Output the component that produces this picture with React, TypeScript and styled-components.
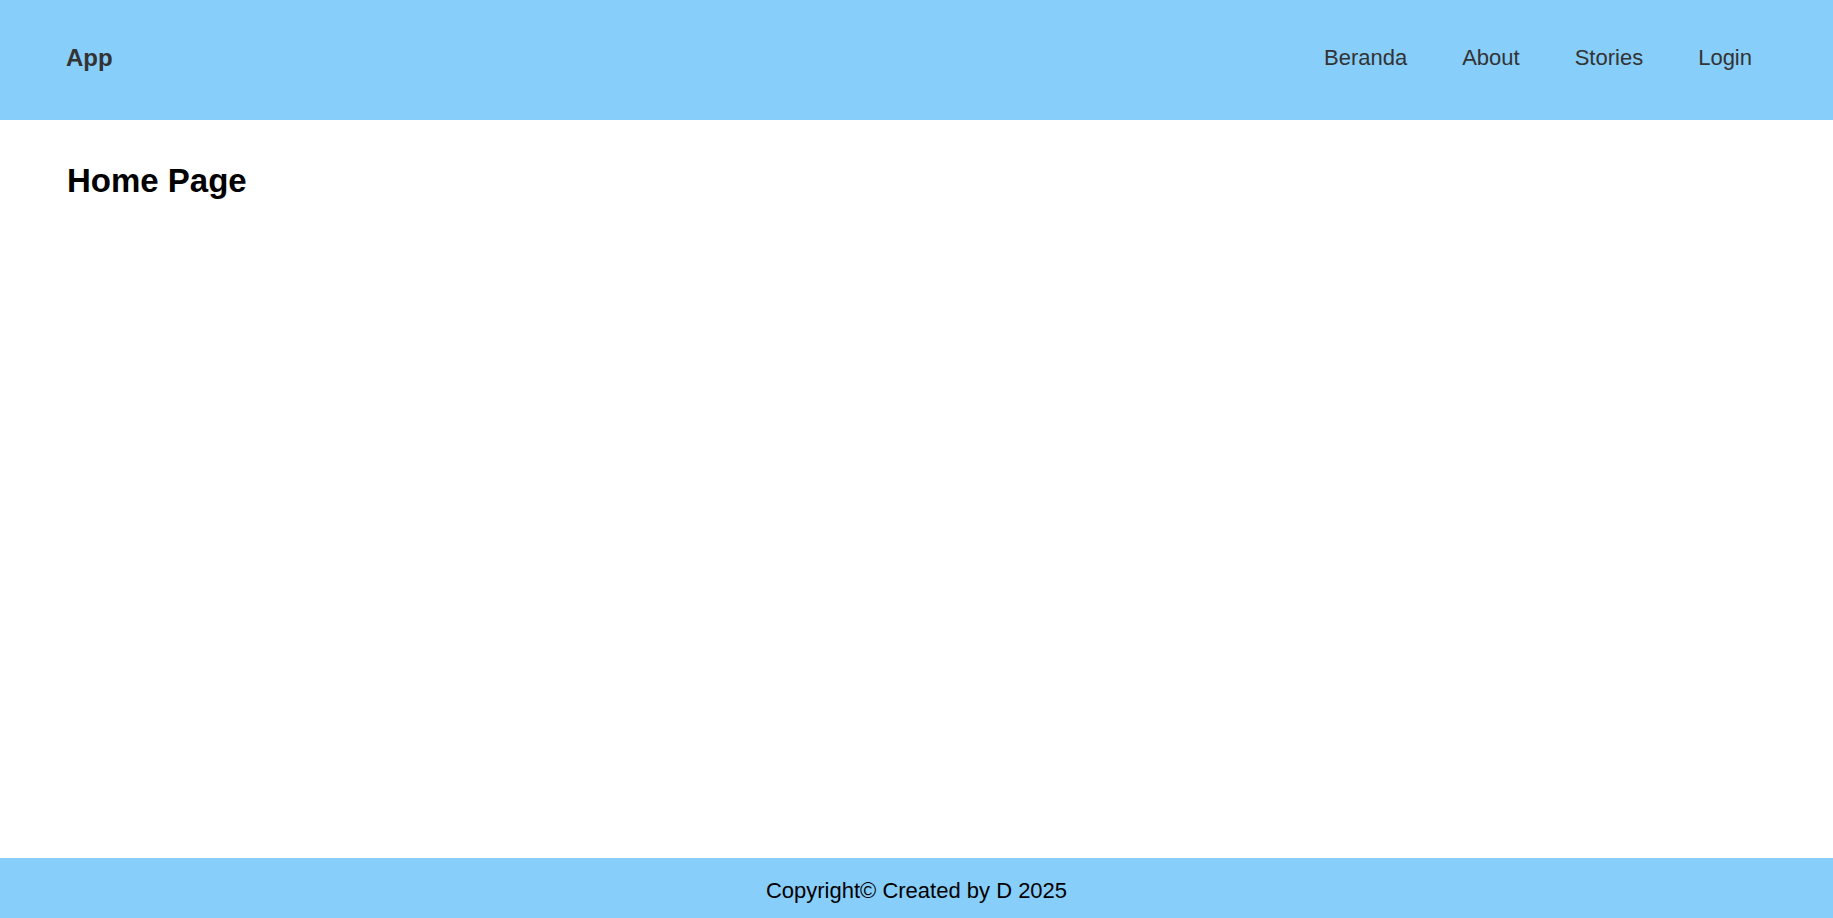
import { createGlobalStyle } from 'styled-components';
import styled from 'styled-components';

const GlobalStyle = createGlobalStyle`
  html, body, #root {
    margin: 0;
    padding: 0;
    height: 100%;
  }
  body {
    font-family: "Liberation Sans", Arial, sans-serif;
    background: #fff;
  }
`;

const navLinks = ['Beranda', 'About', 'Stories', 'Login'];

const App: React.FC = () => {
  return (
    <>
      <GlobalStyle />
      <Page>
        <Header>
          <Brand>App</Brand>
          <Nav>
            {navLinks.map((label) => (
              <NavLink key={label} href="#">
                {label}
              </NavLink>
            ))}
          </Nav>
        </Header>
        <Main>
          <Title>Home Page</Title>
        </Main>
        <Footer>Copyright© Created by D 2025</Footer>
      </Page>
    </>
  );
};

export default App;

// Styled Components
const Page = styled.div`
  display: flex;
  flex-direction: column;
  min-height: 100vh;
`;

const Header = styled.header`
  display: flex;
  align-items: center;
  justify-content: space-between;
  box-sizing: border-box;
  height: 120px;
  padding: 0 81px 5px 66px;
  background: #87cefa;
  color: #333;
`;

const Brand = styled.div`
  font-size: 24px;
  font-weight: bold;
`;

const Nav = styled.nav`
  display: flex;
  gap: 55px;
  padding-top: 1px;
`;

const NavLink = styled.a`
  font-size: 22px;
  color: #333;
  text-decoration: none;
`;

const Main = styled.main`
  flex: 1;
  padding: 42px 67px 0;
`;

const Title = styled.h1`
  margin: 0;
  font-size: 33px;
  font-weight: bold;
  color: #000;
`;

const Footer = styled.footer`
  display: flex;
  align-items: center;
  justify-content: center;
  box-sizing: border-box;
  height: 60px;
  padding-top: 6px;
  background: #87cefa;
  font-size: 22px;
  color: #000;
`;
